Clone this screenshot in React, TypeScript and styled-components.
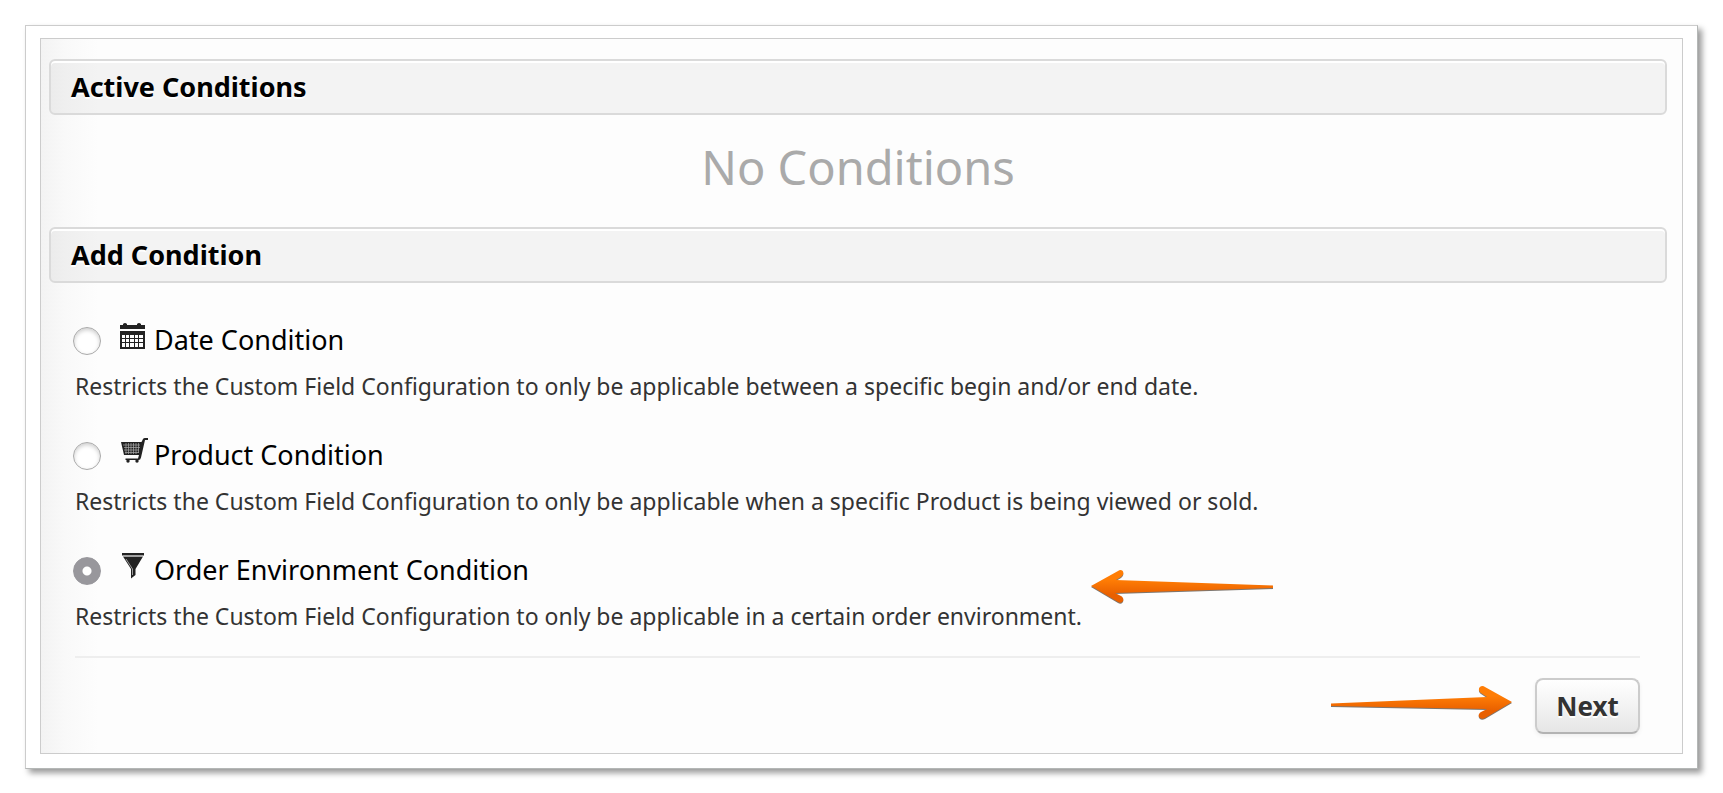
import React, { useState } from "react";
import styled, { createGlobalStyle } from "styled-components";

const GlobalStyle = createGlobalStyle`
  * { box-sizing: border-box; }
  body {
    margin: 0;
    background: #fff;
    font-family: "Noto Sans", "Open Sans", sans-serif;
    color: #000;
  }
`;

const Page = styled.main`
  padding: 25px;
`;

const Frame = styled.div`
  border: 1px solid #ccc;
  border-bottom-color: #b4b7b6;
  border-right-color: #b4b7b6;
  background: #fff;
  padding: 12px 14px 14px;
  box-shadow: 4px 4px 6px rgba(0, 0, 0, 0.4);
`;

const Panel = styled.form`
  border: 1px solid #ccc;
  padding: 20px 15px 19px 8px;
  background: linear-gradient(to right, #f3f3f3 0, #f9f9f9 24px, #fdfdfd 58px);
`;

const SectionTitle = styled.h2`
  margin: 0;
  padding: 0 20px;
  height: 56px;
  border: 2px solid #dadada;
  border-radius: 6px;
  background: rgba(0, 0, 0, 0.04);
  box-shadow: inset 0 2px 0 #fff;
  font-size: 27px;
  line-height: 52px;
  font-weight: 700;
  text-shadow: 0 2px 0 #fff;
`;

const EmptyMessage = styled.p`
  margin: 0;
  padding: 20px 0 28px;
  text-align: center;
  font-size: 47px;
  line-height: 64px;
  color: #aaa;
`;

const Options = styled.div`
  display: flex;
  flex-direction: column;
  gap: 24px;
  margin: 36px 27px 0 26px;
  padding-bottom: 16px;
  border-bottom: 2px solid #eee;
`;

const Option = styled.div`
  position: relative;
`;

const OptionLabel = styled.label`
  display: flex;
  align-items: center;
  height: 44px;
  font-size: 27px;
  line-height: 40px;
`;

const OptionTitle = styled.span`
  padding-bottom: 3px;
`;

const Radio = styled.input`
  appearance: none;
  width: 28px;
  height: 28px;
  margin: 0 17px 0 -2px;
  border: 1px solid #aaa;
  border-radius: 50%;
  background: #fff;
  box-shadow: inset 0 2px 4px rgba(0, 0, 0, 0.2);
  &:checked {
    border-color: #98979c;
    background: radial-gradient(circle, #fff 0 4px, #98979c 5px);
    box-shadow: none;
  }
`;

const Glyph = styled.svg`
  width: 28px;
  height: 28px;
  margin-right: 8px;
  margin-bottom: 8px;
  fill: #222;
  overflow: visible;
`;

const Description = styled.p`
  margin: 0;
  font-size: 23px;
  line-height: 47px;
  color: #333;
`;

const Footer = styled.div`
  display: flex;
  justify-content: flex-end;
  align-items: center;
  gap: 20px;
  margin: 20px 27px 0 26px;
`;

const NextButton = styled.button`
  height: 56px;
  width: 105px;
  padding: 0;
  border: 2px solid #ccc;
  border-bottom-color: #b3b3b3;
  border-radius: 8px;
  background: linear-gradient(#fff, #e6e6e6);
  box-shadow: 0 2px 4px rgba(0, 0, 0, 0.06);
  color: #333;
  font-family: inherit;
  font-size: 26px;
  font-weight: 700;
  line-height: 50px;
  text-shadow: 0 2px 0 #fff;
`;

const ArrowSvg = styled.svg`
  display: block;
  width: 184px;
  height: 36px;
  overflow: visible;
  filter: drop-shadow(0 1px 0 rgba(70, 60, 50, 0.7));
`;

const OptionPointer = styled.div`
  position: absolute;
  left: 1015px;
  top: 20px;
`;

const ButtonPointer = styled.div`
  margin-bottom: 6px;
`;

function Arrow({ id, right }: { id: string; right?: boolean }) {
  return (
    <ArrowSvg viewBox="0 0 184 36" aria-hidden="true">
      <defs>
        <linearGradient id={id} x1="0" y1="0" x2="0" y2="1">
          <stop offset="0.3" stopColor="#ff7d05" />
          <stop offset="0.75" stopColor="#e96000" />
        </linearGradient>
      </defs>
      <path
        fill={`url(#${id})`}
        d={
          right
            ? "M0 18.500 L156 12 L150 8 C145 4 150 -1 154 2 L181 17 L154 33 C149 36 145 30 150 27 L156 24 L0 21 Z"
            : "M183 16.500 L26 11 L31 8 C36 4 32 -1 28 2 L1 17 L28 33 C32 36 36 30 31 27 L25 24 L183 19 Z"
        }
      />
    </ArrowSvg>
  );
}

function CalendarIcon() {
  return (
    <Glyph viewBox="0 0 28 28" aria-hidden="true">
      <path d="M2 2H5V1Q7 -1 9 1V2H19V1Q21 -1 23 1V2H27V6H2Z" />
      <path
        fillRule="evenodd"
        d="M2 8H27V26H2ZM4 12V15H7V12ZM8 12V15H11V12ZM12 12V15H16V12ZM17 12V15H20V12ZM21 12V15H25V12ZM4 16V19H7V16ZM8 16V19H11V16ZM12 16V19H16V16ZM17 16V19H20V16ZM21 16V19H25V16ZM4 20V24H7V20ZM8 20V24H11V20ZM12 20V24H16V20ZM17 20V24H20V20ZM21 20V24H25V20Z"
      />
    </Glyph>
  );
}

function CartIcon() {
  return (
    <Glyph viewBox="0 0 28 28" aria-hidden="true">
      <path d="M3 4H23.500L25 1Q25.500 0 27 0H30V2H27L23 19.500Q22.500 22 20.500 22H7.500V20.500H20L21 17H6Z" />
      <path
        d="M5 7H22M6 9.500H22M6 12H21M7 14.500H21M8 5V16M10.500 5V16M13 5V16M15.500 5V16M18 5V16M20.500 5V15"
        stroke="#aaa"
        strokeWidth="0.7"
      />
      <circle cx="10" cy="23" r="1.700" />
      <circle cx="19" cy="23" r="1.700" />
    </Glyph>
  );
}

function FunnelIcon() {
  return (
    <Glyph viewBox="0 0 28 28" aria-hidden="true">
      <path d="M4 0H26V2.500H4Z" />
      <path d="M5 3.500H25L17.500 16V22L13 25.500V16Z" />
      <path d="M5 3H25M8 6L14.500 16V22" fill="none" stroke="#bbb" strokeWidth="0.8" />
    </Glyph>
  );
}

const conditions = [
  {
    id: "date",
    title: "Date Condition",
    Icon: CalendarIcon,
    text: "Restricts the Custom Field Configuration to only be applicable between a specific begin and/or end date.",
  },
  {
    id: "product",
    title: "Product Condition",
    Icon: CartIcon,
    text: "Restricts the Custom Field Configuration to only be applicable when a specific Product is being viewed or sold.",
  },
  {
    id: "order",
    title: "Order Environment Condition",
    Icon: FunnelIcon,
    text: "Restricts the Custom Field Configuration to only be applicable in a certain order environment.",
  },
];

export default function App() {
  const [selected, setSelected] = useState("order");
  return (
    <>
      <GlobalStyle />
      <Page>
        <Frame>
          <Panel onSubmit={(e) => e.preventDefault()}>
            <SectionTitle>Active Conditions</SectionTitle>
            <EmptyMessage>No Conditions</EmptyMessage>
            <SectionTitle>Add Condition</SectionTitle>
            <Options role="radiogroup" aria-label="Add Condition">
              {conditions.map(({ id, title, Icon, text }) => (
                <Option key={id}>
                  <OptionLabel>
                    <Radio
                      type="radio"
                      name="condition"
                      value={id}
                      checked={selected === id}
                      onChange={() => setSelected(id)}
                      aria-describedby={`${id}-text`}
                    />
                    <Icon />
                    <OptionTitle>{title}</OptionTitle>
                  </OptionLabel>
                  <Description id={`${id}-text`}>{text}</Description>
                  {id === "order" && (
                    <OptionPointer>
                      <Arrow id="arrow-option" />
                    </OptionPointer>
                  )}
                </Option>
              ))}
            </Options>
            <Footer>
              <ButtonPointer>
                <Arrow id="arrow-next" right />
              </ButtonPointer>
              <NextButton type="submit">Next</NextButton>
            </Footer>
          </Panel>
        </Frame>
      </Page>
    </>
  );
}
